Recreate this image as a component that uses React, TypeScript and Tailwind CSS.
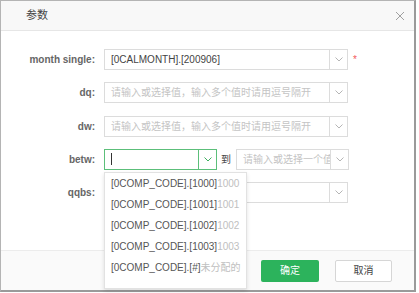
import React from "react";

const font = { fontFamily: '"Liberation Sans", "Noto Sans CJK SC", sans-serif' };

function Chevron({ color = "#b5b5b5" }: { color?: string }) {
  return (
    <svg width="8" height="5" viewBox="0 0 8 5" fill="none">
      <polyline points="0.5,0.5 4,4 7.5,0.5" stroke={color} strokeWidth="1" />
    </svg>
  );
}

function Select({
  width,
  value,
  placeholder,
  active,
  cursor,
}: {
  width: string;
  value?: string;
  placeholder?: string;
  active?: boolean;
  cursor?: boolean;
}) {
  return (
    <div
      className={`flex h-[21px] ${width} border bg-white ${
        active ? "border-[#5cbf7a]" : "border-[#dcdcdc]"
      }`}
    >
      <div className="flex flex-1 items-center overflow-hidden whitespace-nowrap pl-[6px] text-[10px]">
        {cursor && <span className="h-[12px] w-px bg-[#333]" />}
        {value && <span className="text-[#444]">{value}</span>}
        {placeholder && <span className="text-[#c4c4c4]">{placeholder}</span>}
      </div>
      <div
        className={`flex w-[18px] shrink-0 items-center justify-center border-l ${
          active ? "border-[#5cbf7a]" : "border-[#dcdcdc]"
        }`}
      >
        <Chevron color={active ? "#3fae5f" : "#b5b5b5"} />
      </div>
    </div>
  );
}

function Row({ label, children }: { label: string; children: React.ReactNode }) {
  return (
    <div className="flex h-[21px] items-center">
      <div className="w-[94px] text-right text-[10px] font-bold text-[#666]">{label}</div>
      <div className="ml-[9px] flex items-center">{children}</div>
    </div>
  );
}

const PH = "请输入或选择值，输入多个值时请用逗号隔开";

const items = [
  ["[0COMP_CODE].[1000]", "1000"],
  ["[0COMP_CODE].[1001]", "1001"],
  ["[0COMP_CODE].[1002]", "1002"],
  ["[0COMP_CODE].[1003]", "1003"],
  ["[0COMP_CODE].[#]", "未分配的"],
];

export default function App() {
  return (
    <div className="h-[293px] w-[419px] bg-white" style={font}>
      <div className="relative flex h-[292px] w-[416px] flex-col border border-[#b4b4b4] border-r-2 border-r-[#9a9a9a] border-b-2 border-b-[#9a9a9a] bg-white">
        {/* header */}
        <div className="flex h-[30px] shrink-0 items-center justify-between border-b border-[#e6e6e6] bg-[#f8f8f8] pl-[25px] pr-[8px]">
          <span className="text-[11px] text-[#444]">参数</span>
          <svg width="10" height="10" viewBox="0 0 10 10" className="mr-[1px]">
            <path d="M1 1 L9 9 M9 1 L1 9" stroke="#a0a0a0" strokeWidth="1" />
          </svg>
        </div>

        {/* body */}
        <div className="flex h-[219px] shrink-0 flex-col gap-y-[12.25px] pt-[18px]">
          <Row label="month single:">
            <Select width="w-[244px]" value="[0CALMONTH].[200906]" />
            <span className="ml-[5px] text-[10px] text-[#f25a5a]">*</span>
          </Row>
          <Row label="dq:">
            <Select width="w-[244px]" placeholder={PH} />
          </Row>
          <Row label="dw:">
            <Select width="w-[244px]" placeholder={PH} />
          </Row>
          <Row label="betw:">
            <Select width="w-[113px]" active cursor />
            <span className="ml-[4px] mr-[5px] text-[10px] text-[#444]">到</span>
            <Select width="w-[113px]" placeholder="请输入或选择一个值" />
          </Row>
          <Row label="qqbs:">
            <Select width="w-[244px]" />
          </Row>
        </div>

        {/* footer */}
        <div className="flex flex-1 items-center justify-end gap-[16px] border-t border-[#ececec] bg-[#fafafa] pr-[22px]">
          <button className="h-[22px] w-[58px] rounded-[2px] bg-[#2cb35c] text-[10px] text-white">确定</button>
          <button className="h-[22px] w-[57px] rounded-[2px] border border-[#d6d6d6] bg-white text-[10px] text-[#444]">取消</button>
        </div>

        {/* dropdown */}
        <div className="absolute left-[103px] top-[171px] h-[117px] w-[143px] border border-[#e2e2e2] bg-white shadow-[0_2px_4px_rgba(0,0,0,0.12)]">
          {items.map(([code, name]) => (
            <div key={code} className="flex h-[21px] items-center whitespace-nowrap pl-[6px] text-[10px]">
              <span className="text-[#555]">{code}</span>
              <span className="text-[#c0c0c0]">{name}</span>
            </div>
          ))}
        </div>
      </div>
    </div>
  );
}
